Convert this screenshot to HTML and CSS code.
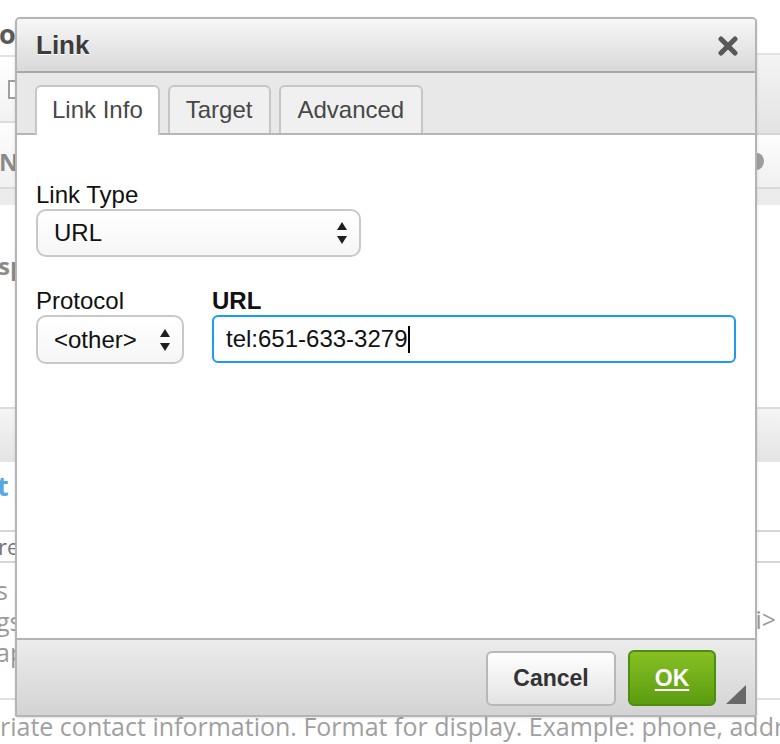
FILE: index.html
```html
<!DOCTYPE html>
<html>
<head>
<meta charset="utf-8">
<title>Link</title>
<link rel="stylesheet" href="styles.css">
</head>
<body>
<div class="page">
  <div class="bg">
    <div class="bg-top">
      <div class="col">
        <div class="l-head">o</div>
        <div class="l-bar"><span class="l-box"></span></div>
        <div class="l-tabs">N</div>
      </div>
      <div class="col">
        <div class="r-head"></div>
        <div class="r-bar"></div>
        <div class="r-tabs"><span class="r-blob"></span></div>
      </div>
    </div>
    <div class="band"></div>
    <div class="sec">sp</div>
    <div class="gray"></div>
    <div class="link-row">t</div>
    <div class="input-row">re</div>
    <div class="desc">
      <div class="desc-left">s<br>gs<br>ap</div>
      <div class="desc-right"><br>li&gt;</div>
    </div>
    <div class="bottom-text">riate contact information. Format for display. Example: phone, address</div>
  </div>

  <div class="dialog">
    <div class="dlg-title">
      <span class="dlg-title-text">Link</span>
      <svg class="close" width="20" height="20" viewBox="0 0 20 20"><path d="M3 3L17 17M17 3L3 17" stroke="#575757" stroke-width="5" stroke-linecap="round" fill="none"/></svg>
    </div>
    <div class="dlg-tabs">
      <div class="tab active">Link Info</div>
      <div class="tab">Target</div>
      <div class="tab">Advanced</div>
    </div>
    <div class="dlg-body">
      <div class="field">
        <div class="label">Link Type</div>
        <div class="select select-type">
          <span>URL</span>
          <svg class="arrows" width="10" height="22" viewBox="0 0 10 22"><path d="M0 8L5 0L10 8Z M0 14L10 14L5 22Z" fill="#1f1f1f"/></svg>
        </div>
      </div>
      <div class="row">
        <div class="field field-protocol">
          <div class="label">Protocol</div>
          <div class="select">
            <span>&lt;other&gt;</span>
            <svg class="arrows" width="10" height="22" viewBox="0 0 10 22"><path d="M0 8L5 0L10 8Z M0 14L10 14L5 22Z" fill="#1f1f1f"/></svg>
          </div>
        </div>
        <div class="field field-url">
          <div class="label label-bold">URL</div>
          <div class="input">tel:651-633-3279<span class="caret"></span></div>
        </div>
      </div>
    </div>
    <div class="dlg-foot">
      <button class="btn btn-cancel">Cancel</button>
      <button class="btn btn-ok">OK</button>
      <span class="resize"></span>
    </div>
  </div>
</div>
</body>
</html>
```

FILE: styles.css
```css
* { box-sizing: border-box; }
html, body { margin: 0; padding: 0; }
body {
  width: 780px;
  height: 744px;
  overflow: hidden;
  background: #fff;
  font-family: "Liberation Sans", Arial, sans-serif;
}
.page {
  position: relative;
  width: 780px;
  height: 744px;
  overflow: hidden;
}

/* ---------- background page ---------- */
.bg {
  display: flex;
  flex-direction: column;
  font-family: "Open Sans", "DejaVu Sans", sans-serif;
}
.bg-top {
  display: grid;
  grid-template-columns: 1fr 1fr;
  height: 187px;
}
.col { display: flex; flex-direction: column; }
.l-head {
  height: 57px;
  border-bottom: 2px solid #e3e3e3;
  font-weight: 700;
  font-size: 27px;
  line-height: 30px;
  color: #5a5a5a;
  padding-top: 19px;
  margin-left: -1px;
}
.l-bar {
  height: 66px;
  border-bottom: 2px solid #dcdcdc;
  background: linear-gradient(#ffffff, #f2f2f2);
  padding: 23px 0 0 8px;
}
.l-box {
  display: block;
  width: 40px;
  height: 19px;
  border: 2px solid #a0a0a0;
  background: #fff;
}
.l-tabs {
  flex: 1;
  background: linear-gradient(#fdfdfd, #f1f1f1);
  font-weight: 700;
  font-size: 24px;
  line-height: 28px;
  color: #8a8a8a;
  padding-top: 25px;
  margin-left: -1px;
}
.r-head {
  height: 55px;
  border-bottom: 2px solid #e3e3e3;
}
.r-bar {
  height: 80px;
  border-bottom: 2px solid #d6d6d6;
  background: linear-gradient(#f4f4f4, #e3e3e3);
}
.r-tabs {
  flex: 1;
  background: linear-gradient(#fdfdfd, #f0f0f0);
  display: flex;
  justify-content: flex-end;
  padding: 18px 16px 0 0;
}
.r-blob {
  display: block;
  width: 14px;
  height: 17px;
  border-radius: 7px 7px 7px 7px / 8px 8px 9px 9px;
  background: #9d9d9d;
}
.band {
  height: 18px;
  border-top: 2px solid #dadada;
  background: #ececec;
}
.sec {
  height: 202px;
  font-weight: 700;
  font-size: 24px;
  line-height: 28px;
  color: #8a8a8a;
  padding-top: 47px;
  margin-left: -2px;
}
.gray {
  height: 55px;
  border-top: 2px solid #dcdcdc;
  background: linear-gradient(#f5f5f5, #e4e4e4);
}
.link-row {
  height: 68px;
  font-weight: 700;
  font-size: 27px;
  line-height: 30px;
  color: #5aa8e0;
  padding-top: 9px;
  margin-left: -3px;
}
.input-row {
  height: 33px;
  border-top: 2px solid #d6d6d6;
  border-bottom: 2px solid #d6d6d6;
  font-size: 22px;
  line-height: 29px;
  color: #777;
  margin-left: -2px;
}
.desc {
  height: 137px;
  display: flex;
  justify-content: space-between;
  border-bottom: 2px solid #e0e0e0;
  font-size: 25px;
  line-height: 31px;
  color: #9a9a9a;
  padding-top: 12px;
}
.desc-left { margin-left: -4px; }
.desc-right { padding-right: 4px; margin-top: -2px; }
.bottom-text {
  font-size: 25px;
  line-height: 30px;
  color: #a0a0a0;
  white-space: nowrap;
  padding-top: 11px;
}

/* ---------- dialog ---------- */
.dialog {
  position: absolute;
  left: 15px;
  top: 17px;
  width: 742px;
  height: 700px;
  border: 2px solid #b4b4b4;
  border-radius: 5px 5px 2px 2px;
  background: #fff;
  display: flex;
  flex-direction: column;
  overflow: hidden;
  box-shadow: 0 1px 3px rgba(0,0,0,0.12);
}
.dlg-title {
  height: 54px;
  flex: none;
  border-bottom: 2px solid #a7a7a7;
  background: linear-gradient(#f7f7f7, #d9d9d9);
  display: flex;
  align-items: center;
  justify-content: space-between;
  padding: 0 17px 0 19px;
}
.dlg-title-text {
  font-weight: 700;
  font-size: 26px;
  color: #3c3c3c;
  text-shadow: 0 1px 0 #fff;
}
.close { display: block; margin-top: 1px; }

.dlg-tabs {
  height: 62px;
  flex: none;
  background: #e8e8e8;
  border-bottom: 2px solid #b6b6b6;
  display: flex;
  align-items: flex-end;
  gap: 8px;
  padding-left: 18px;
}
.tab {
  height: 48px;
  border: 2px solid #c6c6c6;
  border-bottom: none;
  border-radius: 6px 6px 0 0;
  padding: 0 17px 0 16px;
  background: #f0f0f0;
  font-size: 24px;
  line-height: 46px;
  color: #474747;
}
.tab.active {
  height: 50px;
  margin-bottom: -2px;
  padding: 0 15px;
  background: #fff;
}

.dlg-body {
  flex: 1;
  background: #fff;
  padding: 47px 19px 0 19px;
}
.field { display: flex; flex-direction: column; }
.label {
  font-size: 24px;
  line-height: 26px;
  color: #111;
  margin-bottom: 1px;
}
.label-bold { font-weight: 700; }
.select {
  height: 48px;
  border: 2px solid #c8c8c8;
  border-radius: 10px;
  background: linear-gradient(#ffffff, #f6f6f6);
  display: flex;
  align-items: center;
  justify-content: space-between;
  padding: 0 12px 0 16px;
  font-size: 24px;
  color: #111;
}
.select-type { width: 325px; }
.arrows { display: block; }
.row {
  display: flex;
  gap: 28px;
  margin-top: 31px;
}
.field-protocol { width: 148px; flex: none; }
.field-protocol .select { height: 49px; }
.field-url { flex: 1; }
.input {
  height: 48px;
  border: 2px solid #1c9bf0;
  border-radius: 6px;
  box-shadow: inset 0 1px 2px rgba(0,0,0,0.08);
  display: flex;
  align-items: center;
  padding-left: 12px;
  font-size: 24px;
  color: #111;
}
.caret {
  display: block;
  width: 2px;
  height: 27px;
  background: #000;
  margin-left: 1px;
}

.dlg-foot {
  position: relative;
  height: 77px;
  flex: none;
  border-top: 2px solid #b2b2b2;
  background: linear-gradient(#ececec, #d3d3d3);
  display: flex;
  justify-content: flex-end;
  align-items: flex-start;
  gap: 12px;
  padding: 11px 39px 0 0;
}
.btn {
  height: 55px;
  border-radius: 6px;
  font-family: "Liberation Sans", Arial, sans-serif;
  font-weight: 700;
  font-size: 23px;
  padding: 0;
  margin: 0;
}
.btn-cancel {
  width: 130px;
  border: 2px solid #b8b8b8;
  background: linear-gradient(#ffffff, #e3e3e3);
  color: #333;
}
.btn-ok {
  width: 88px;
  height: 56px;
  margin-top: -1px;
  border: 2px solid #4f8d10;
  background: linear-gradient(#86c024, #5c9c10);
  color: #fff;
  text-decoration: underline;
  text-underline-offset: 3px;
  text-decoration-thickness: 2px;
}
.resize {
  position: absolute;
  right: 9px;
  bottom: 11px;
  width: 0;
  height: 0;
  border-left: 20px solid transparent;
  border-bottom: 19px solid #686868;
}
```
